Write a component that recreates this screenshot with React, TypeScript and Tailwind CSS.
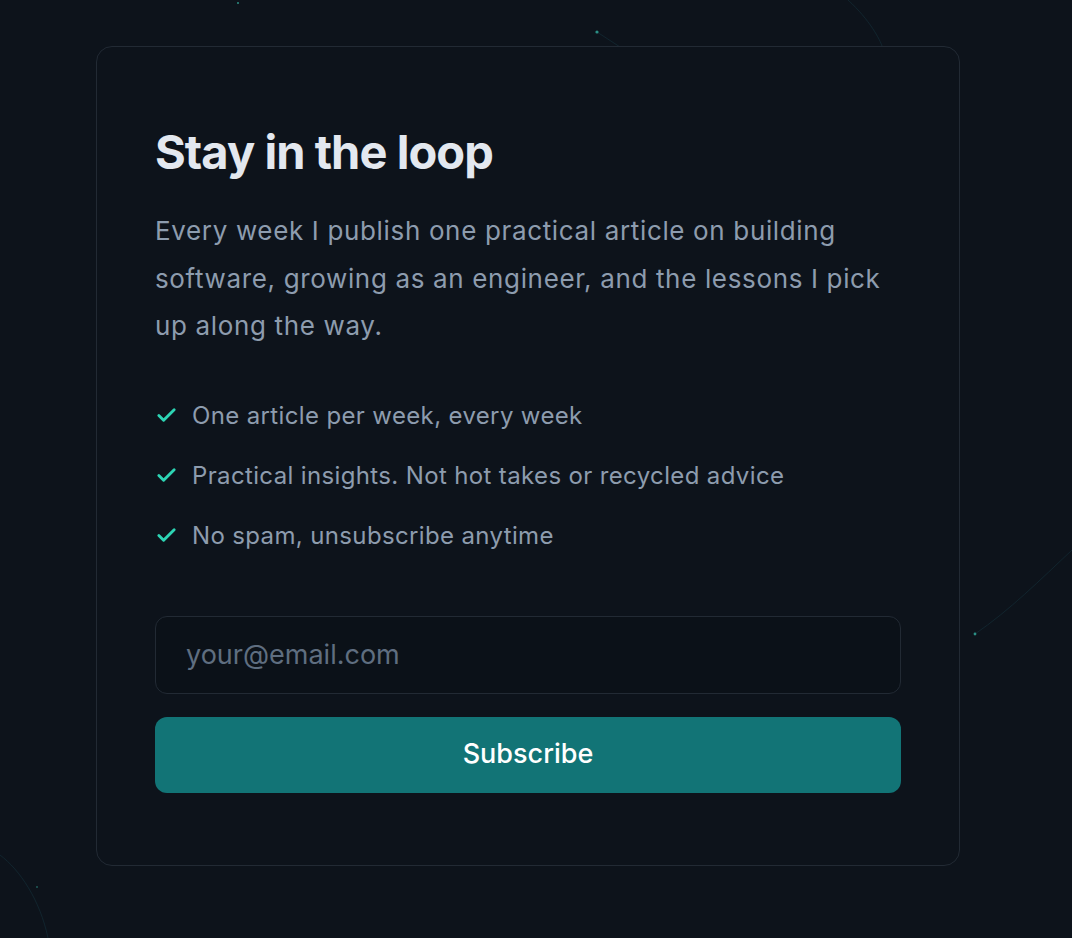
import { Check } from 'lucide-react';

const perks = [
  'One article per week, every week',
  'Practical insights. Not hot takes or recycled advice',
  'No spam, unsubscribe anytime',
];

function Backdrop() {
  return (
    <svg className="absolute inset-0 w-full h-full pointer-events-none" viewBox="0 0 1072 938" preserveAspectRatio="none">
      <g stroke="#14313a" strokeWidth="1" fill="none" opacity="0.6">
        <path d="M597 32 L640 60" />
        <path d="M848 0 C870 20 880 40 882 46" />
        <path d="M975 634 C1010 610 1040 580 1072 550" />
        <path d="M0 855 C20 870 40 900 48 938" />
      </g>
      <circle cx="597" cy="32" r="1.6" fill="#2b8f85" />
      <circle cx="975" cy="634" r="1.4" fill="#2b8f85" />
      <circle cx="238" cy="3" r="1" fill="#2b8f85" />
      <circle cx="37" cy="887" r="1" fill="#1f5d5a" />
    </svg>
  );
}

export default function App() {
  return (
    <div className="relative min-h-screen w-full overflow-hidden bg-[#0d131b]" style={{ fontFamily: 'Inter, "Noto Sans", sans-serif' }}>
      <Backdrop />
      <div className="relative ml-[96px] pt-[46px]">
        <div className="w-[864px] rounded-2xl border border-[#222a34] bg-[#0d131b] px-[58px] pt-[76px] pb-[72px]">
          <h2 className="text-[47px] leading-[58px] font-bold tracking-[-0.02em] text-[#e3e8ef]">Stay in the loop</h2>
          <p className="mt-[26px] text-[26px] leading-[47.5px] tracking-[0.025em] text-[#8d9cae]">
            Every week I publish one practical article on building software, growing as an engineer, and the lessons I pick up along the way.
          </p>
          <ul className="mt-[48px] flex flex-col gap-[24px]">
            {perks.map(p => (
              <li key={p} className="flex items-center gap-[14px] text-[24px] leading-[36px] tracking-[0.015em] text-[#8d9cae]">
                <Check className="h-[23px] w-[23px] text-[#2dd4b4]" strokeWidth={3} />
                {p}
              </li>
            ))}
          </ul>
          <form className="mt-[62px] flex flex-col gap-[23px]" onSubmit={e => e.preventDefault()}>
            <input
              type="email"
              placeholder="your@email.com"
              className="h-[78px] w-full rounded-xl border border-[#222a34] bg-[#0b1118] px-[30px] text-[27px] text-[#e3e8ef] placeholder:text-[#5f6e80] focus:outline-none"
            />
            <button type="submit" className="h-[76px] w-full rounded-xl bg-[#127476] text-[27px] font-medium text-white">
              Subscribe
            </button>
          </form>
        </div>
      </div>
    </div>
  );
}
